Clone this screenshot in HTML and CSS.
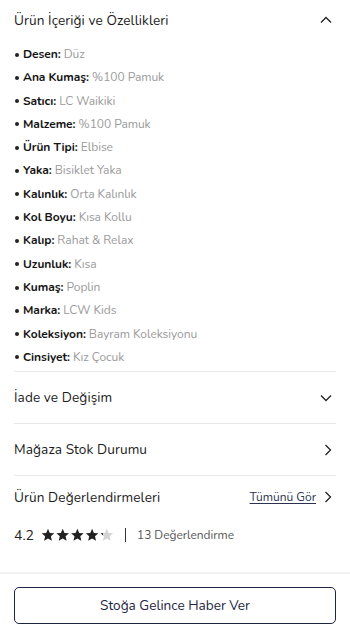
FILE: index.html
```html
<!DOCTYPE html>
<html lang="tr">
<head>
<meta charset="utf-8">
<link rel="stylesheet" href="styles.css">
</head>
<body>
<div class="page">
  <main class="content">
    <section class="acc open">
      <div class="acc-head">
        <span class="acc-title">Ürün İçeriği ve Özellikleri</span>
        <svg class="chev" width="12" height="8" viewBox="0 0 12 8"><path d="M1 6.5 L6 1.5 L11 6.5" fill="none" stroke="#222" stroke-width="1.3"/></svg>
      </div>
      <ul class="specs">
        <li><b>Desen:</b> <span>Düz</span></li>
        <li><b>Ana Kumaş:</b> <span>%100 Pamuk</span></li>
        <li><b>Satıcı:</b> <span>LC Waikiki</span></li>
        <li><b>Malzeme:</b> <span>%100 Pamuk</span></li>
        <li><b>Ürün Tipi:</b> <span>Elbise</span></li>
        <li><b>Yaka:</b> <span>Bisiklet Yaka</span></li>
        <li><b>Kalınlık:</b> <span>Orta Kalınlık</span></li>
        <li><b>Kol Boyu:</b> <span>Kısa Kollu</span></li>
        <li><b>Kalıp:</b> <span>Rahat &amp; Relax</span></li>
        <li><b>Uzunluk:</b> <span>Kısa</span></li>
        <li><b>Kumaş:</b> <span>Poplin</span></li>
        <li><b>Marka:</b> <span>LCW Kids</span></li>
        <li><b>Koleksiyon:</b> <span>Bayram Koleksiyonu</span></li>
        <li><b>Cinsiyet:</b> <span>Kız Çocuk</span></li>
      </ul>
    </section>
    <section class="acc row">
      <span class="acc-title">İade ve Değişim</span>
      <svg class="chev" width="12" height="8" viewBox="0 0 12 8"><path d="M1 1.5 L6 6.5 L11 1.5" fill="none" stroke="#222" stroke-width="1.3"/></svg>
    </section>
    <section class="acc row">
      <span class="acc-title">Mağaza Stok Durumu</span>
      <svg class="chev" width="8" height="12" viewBox="0 0 8 12"><path d="M1.5 1 L6.5 6 L1.5 11" fill="none" stroke="#222" stroke-width="1.3"/></svg>
    </section>
    <section class="reviews">
      <div class="rev-head">
        <span class="acc-title">Ürün Değerlendirmeleri</span>
        <a class="all">Tümünü Gör
          <svg width="8" height="12" viewBox="0 0 8 12"><path d="M1.5 1 L6.5 6 L1.5 11" fill="none" stroke="#222" stroke-width="1.3"/></svg>
        </a>
      </div>
      <div class="rating">
        <span class="score">4.2</span>
        <span class="stars">
          <svg width="73" height="14" viewBox="0 0 73 14">
            <defs>
              <linearGradient id="part">
                <stop offset="0.2" stop-color="#222"/>
                <stop offset="0.2" stop-color="#d4d4d4"/>
              </linearGradient>
              <path id="st" d="M7 0.8 L8.8 5 L13.3 5.3 L9.9 8.3 L10.9 12.8 L7 10.4 L3.1 12.8 L4.1 8.3 L0.7 5.3 L5.2 5 Z"/>
            </defs>
            <use href="#st" x="0" fill="#222"/>
            <use href="#st" x="14.7" fill="#222"/>
            <use href="#st" x="29.4" fill="#222"/>
            <use href="#st" x="44.1" fill="#222"/>
            <use href="#st" x="58.8" fill="url(#part)"/>
          </svg>
        </span>
        <span class="sep"></span>
        <span class="count">13 Değerlendirme</span>
      </div>
    </section>
  </main>
  <footer class="bar">
    <button class="notify">Stoğa Gelince Haber Ver</button>
  </footer>
</div>
</body>
</html>
```
FILE: styles.css
```css
* { box-sizing: border-box; }
html, body { margin: 0; padding: 0; background: #fff; }
body {
  font-family: "Nunito", "Lato", "Open Sans", sans-serif;
  color: #1b1b1b;
  width: 350px;
  height: 640px;
  overflow: hidden;
}
.page { display: flex; flex-direction: column; height: 640px; }
.content { flex: 1; padding: 0 14px; }
.acc-title { font-size: 13.6px; color: #1b1b1b; letter-spacing: 0.1px; }
.chev { display: block; margin-right: 4px; }
.acc.open { border-bottom: 1px solid #e8e8e8; }
.acc-head {
  height: 43px;
  padding-bottom: 3px;
  display: flex;
  align-items: center;
  justify-content: space-between;
}
.specs { list-style: none; margin: 0; padding: 0 0 2px 0; }
.specs li {
  height: 23.3px;
  line-height: 23.3px;
  font-size: 12px;
  letter-spacing: -0.05px;
  white-space: nowrap;
}
.specs li::before {
  content: "";
  display: inline-block;
  width: 4px;
  height: 4px;
  border-radius: 50%;
  background: #222;
  margin: 0 4px 1px 1px;
  vertical-align: middle;
}
.specs b { font-weight: 700; color: #141414; }
.specs span { color: #9a9a9a; }
.acc.row {
  height: 52px;
  display: flex;
  align-items: center;
  justify-content: space-between;
  border-bottom: 1px solid #e8e8e8;
}
.reviews { padding-top: 8px; }
.rev-head {
  height: 26px;
  display: flex;
  align-items: center;
  justify-content: space-between;
}
.all {
  font-size: 12px;
  color: #2b3350;
  text-decoration: underline;
  text-underline-offset: 2px;
  display: flex;
  align-items: center;
  gap: 8px;
  margin-right: 4px;
}
.all svg { display: block; }
.rating {
  margin-top: 12px;
  height: 26px;
  display: flex;
  align-items: center;
}
.score { font-size: 14px; color: #222; }
.stars { margin-left: 7px; display: flex; }
.stars svg { display: block; }
.sep { width: 1px; height: 14px; background: #333; margin: 0 11px 0 11px; }
.count { font-size: 11.9px; color: #555; }
.bar {
  height: 68px;
  border-top: 2px solid #f2f2f2;
  padding: 13px 14px 0;
}
.notify {
  width: 100%;
  height: 37px;
  background: #fff;
  border: 1.3px solid #1c2541;
  border-radius: 5px;
  font-family: inherit;
  font-size: 13.6px;
  color: #1c2541;
  cursor: pointer;
}
```
